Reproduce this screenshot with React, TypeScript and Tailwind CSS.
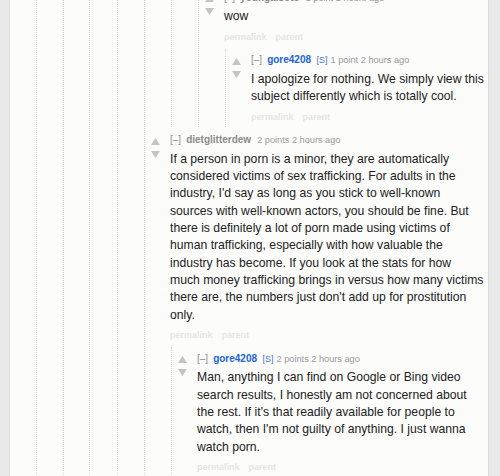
import React from 'react';

type CommentProps = {
  author: string;
  submitter?: boolean;
  score: string;
  time: string;
  lines: string[];
  className?: string;
  children?: React.ReactNode;
};

const UpArrow = () => (
  <svg width="9" height="7" viewBox="0 0 9 7" className="block">
    <polygon points="0,7 4.5,0 9,7" fill="#c4c4c4" />
  </svg>
);

const DownArrow = () => (
  <svg width="9" height="7" viewBox="0 0 9 7" className="block">
    <polygon points="0,0 9,0 4.5,7" fill="#c4c4c4" />
  </svg>
);

// body lines are kept as the reference wraps them
const Comment = ({ author, submitter, score, time, lines, className = '', children }: CommentProps) => (
  <div className={`pt-[5.5px] ${className}`}>
    <div className="flex pb-[4px]">
      <div className="w-[25px] shrink-0 pl-[6px] pt-[3.5px]">
        <UpArrow />
        <div className="mt-[6px]">
          <DownArrow />
        </div>
      </div>
      <div className="min-w-0 flex-1">
        <div className="h-[12px] whitespace-nowrap text-[10px] leading-[12px] text-[#8f8f8f]">
          <span>[–]</span>
          <span className={`ml-[5px] font-bold ${submitter ? 'text-[#2263d9]' : 'text-[#8a8a8a]'}`}>{author}</span>
          {submitter && <span className="ml-[5.5px] text-[9px] text-[#4b77d1]">[S]</span>}
          <span className={`${submitter ? 'ml-[3px]' : 'ml-[6px]'} text-[9.2px] text-[#9a9a9a]`}>
            {score} {time}
          </span>
        </div>
        <p className="mt-[4.5px] whitespace-nowrap text-[12.2px] leading-[17.3px] text-[#222]">
          {lines.map((line, i) => (
            <React.Fragment key={i}>
              {i > 0 && <br />}
              {line}
            </React.Fragment>
          ))}
        </p>
        <div className="mt-[5.5px] h-[12px] whitespace-nowrap text-[9px] font-bold leading-[12px] text-[#e6e6e6]">
          <span>permalink</span>
          <span className="ml-[9px]">parent</span>
        </div>
      </div>
    </div>
    {children && <div className="ml-[26px] mt-[2px] border-l border-dotted border-[#dcdcdc]">{children}</div>}
  </div>
);

const Level = ({ ml, className = '', children }: { ml: string; className?: string; children: React.ReactNode }) => (
  <div className={`${ml} border-l border-dotted border-[#dcdcdc] ${className}`}>{children}</div>
);

export default function App() {
  return (
    <div className="flex h-[476px] overflow-hidden bg-[#e9e9e9] font-['Liberation_Sans',Arial,sans-serif]">
      <div className="w-[10px] shrink-0 border-r border-[#dfdfdf]" />
      <div className="min-w-0 flex-1 overflow-hidden bg-[#fcfcfb] pr-[2px]">
        <Level ml="ml-[26px]">
          <Level ml="ml-[26px]">
            <Level ml="ml-[25px]">
              <Level ml="ml-[27px]">
                <Level ml="ml-[26px]" className="pb-[10px]">
                  <Level ml="ml-[26px]" className="-mt-[14px]">
                    <Level ml="ml-[26px]">
                      <Comment author="youngalsoto" score="1 point" time="2 hours ago" lines={['wow']}>
                        <Comment
                          author="gore4208"
                          submitter
                          score="1 point"
                          time="2 hours ago"
                          lines={[
                            'I apologize for nothing. We simply view this',
                            'subject differently which is totally cool.',
                          ]}
                        />
                      </Comment>
                    </Level>
                  </Level>
                  <Comment
                    className="mt-[2px]"
                    author="dietglitterdew"
                    score="2 points"
                    time="2 hours ago"
                    lines={[
                      'If a person in porn is a minor, they are automatically',
                      'considered victims of sex trafficking. For adults in the',
                      "industry, I'd say as long as you stick to well-known",
                      'sources with well-known actors, you should be fine. But',
                      'there is definitely a lot of porn made using victims of',
                      'human trafficking, especially with how valuable the',
                      'industry has become. If you look at the stats for how',
                      'much money trafficking brings in versus how many victims',
                      "there are, the numbers just don't add up for prostitution",
                      'only.',
                    ]}
                  >
                    <Comment
                      author="gore4208"
                      submitter
                      score="2 points"
                      time="2 hours ago"
                      lines={[
                        'Man, anything I can find on Google or Bing video',
                        'search results, I honestly am not concerned about',
                        "the rest. If it's that readily available for people to",
                        "watch, then I'm not guilty of anything. I just wanna",
                        'watch porn.',
                      ]}
                    />
                  </Comment>
                </Level>
              </Level>
            </Level>
          </Level>
        </Level>
      </div>
      <div className="w-[12px] shrink-0 border-l border-[#dcdcdc]" />
    </div>
  );
}
